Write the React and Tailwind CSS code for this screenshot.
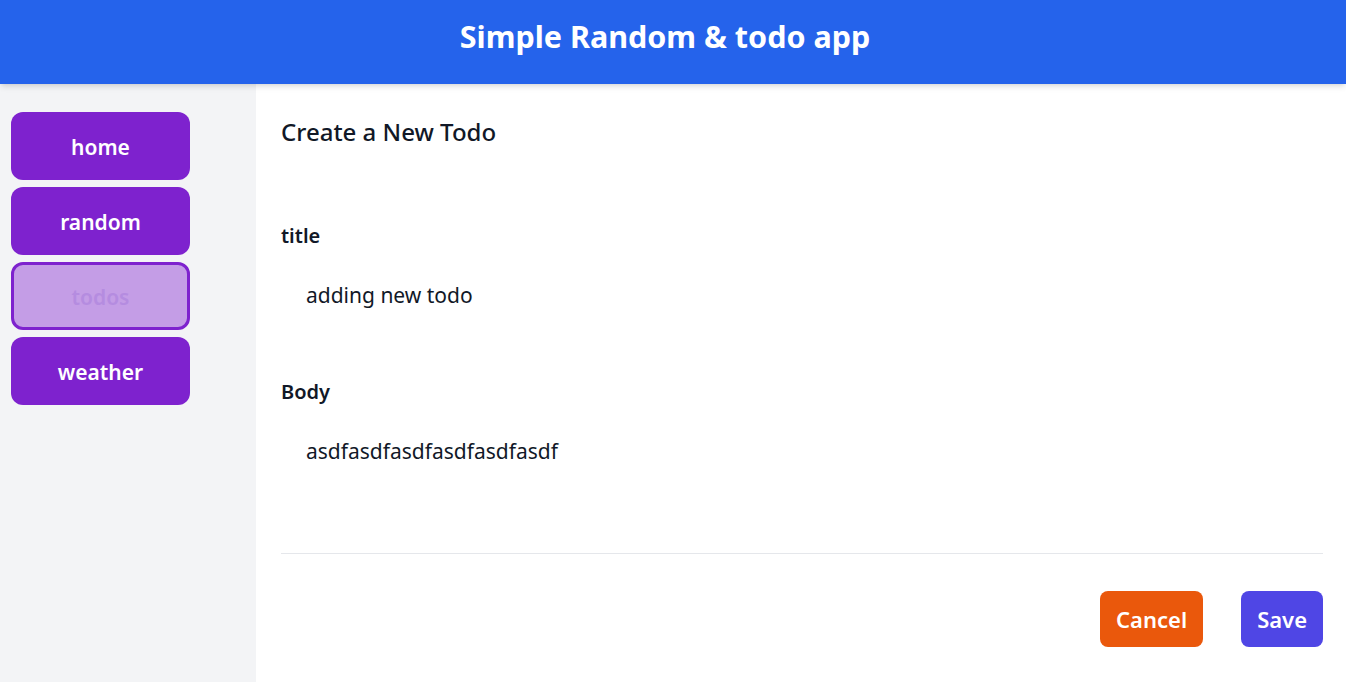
import React, { useState } from 'react';

const navItems = ['home', 'random', 'todos', 'weather'];

const App = () => {
    const [active, setActive] = useState('todos');
    const [todo, setTodo] = useState({
        title: 'adding new todo',
        body: 'asdfasdfasdfasdfasdfasdf'
    });

    return (
        <div className="min-h-screen flex flex-col bg-white font-['Noto_Sans',sans-serif] text-[#111827]">
            <header className="h-[84px] bg-[#2563eb] flex items-center justify-center pb-[10px] pr-4 shadow-md z-10">
                <h1 className="text-[30.5px] font-bold text-white">Simple Random &amp; todo app</h1>
            </header>

            <div className="flex flex-1">
                <aside className="w-64 bg-[#f3f4f6] pt-7 pl-[11px] flex flex-col gap-[7px]">
                    {navItems.map(item => (
                        <button
                            key={item}
                            onClick={() => setActive(item)}
                            className={`w-[179px] h-[68px] pt-[3px] rounded-xl text-[21px] font-semibold ${
                                active === item
                                    ? 'bg-[#c49de6] border-[3px] border-[#7e22ce] text-[#b58ce0]'
                                    : 'bg-[#7e22ce] text-white'
                            }`}
                        >
                            {item}
                        </button>
                    ))}
                </aside>

                <main className="flex-1 pl-[25px] pr-[23px] pt-[24px] pb-[35px] flex flex-col">
                    <h2 className="text-2xl font-medium pt-[8px]">Create a New Todo</h2>

                    <div className="mt-[74px] flex flex-col">
                        <label className="text-xl font-semibold">title</label>
                        <input
                            className="mt-[30px] pl-[25px] text-[21px] outline-none"
                            value={todo.title}
                            onChange={e => setTodo({...todo, title: e.target.value})}
                        />
                    </div>

                    <div className="mt-[66px] flex flex-col">
                        <label className="text-xl font-semibold">Body</label>
                        <input
                            className="mt-[30px] pl-[25px] text-[21px] outline-none"
                            value={todo.body}
                            onChange={e => setTodo({...todo, body: e.target.value})}
                        />
                    </div>

                    <div className="mt-[86px] border-t border-[#e5e7eb] pt-[37px] flex justify-end gap-[38px]">
                        <button className="h-14 px-4 rounded-lg bg-[#ea580c] text-white text-[22px] font-semibold">
                            Cancel
                        </button>
                        <button className="h-14 px-4 rounded-lg bg-[#4f46e5] text-white text-[22px] font-semibold">
                            Save
                        </button>
                    </div>
                </main>
            </div>
        </div>
    );
};

export default App;
